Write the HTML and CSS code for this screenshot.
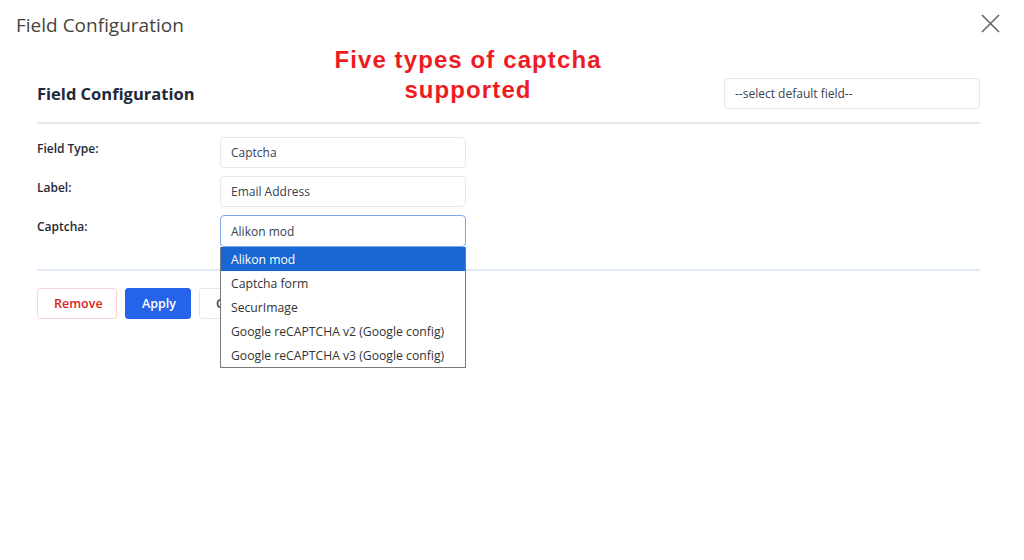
FILE: index.html
```html
<!DOCTYPE html>
<html lang="en">
<head>
    <meta charset="UTF-8">
    <title>Field Configuration</title>
    <link rel="stylesheet" href="styles.css">
</head>
<body>
    <div class="modal">
        <div class="modal-header">
            <h1 class="modal-title">Field Configuration</h1>
            <button class="close-btn" aria-label="Close">
                <svg width="19" height="19" viewBox="0 0 19 19">
                    <path d="M1 1 L18 18 M18 1 L1 18" stroke="#6b6560" stroke-width="1.6" fill="none"/>
                </svg>
            </button>
        </div>

        <div class="modal-body">
            <div class="note">Five types of captcha<br>supported</div>

            <div class="config-head">
                <h2 class="config-title">Field Configuration</h2>
                <div class="field-box default-field">--select default field--</div>
            </div>

            <div class="config-form">
                <div class="form-row">
                    <label class="form-label">Field Type:</label>
                    <div class="field-box">Captcha</div>
                </div>
                <div class="form-row">
                    <label class="form-label">Label:</label>
                    <div class="field-box">Email Address</div>
                </div>
                <div class="form-row">
                    <label class="form-label">Captcha:</label>
                    <div class="select-wrap">
                        <div class="field-box focused">Alikon mod</div>
                        <ul class="options">
                            <li class="selected">Alikon mod</li>
                            <li>Captcha form</li>
                            <li>SecurImage</li>
                            <li>Google reCAPTCHA v2 (Google config)</li>
                            <li>Google reCAPTCHA v3 (Google config)</li>
                        </ul>
                    </div>
                </div>
            </div>

            <div class="actions">
                <button class="btn btn-remove">Remove</button>
                <button class="btn btn-apply">Apply</button>
                <button class="btn btn-cancel">Cancel</button>
            </div>
        </div>
    </div>
</body>
</html>
```

FILE: styles.css
```css
* {
    margin: 0;
    padding: 0;
    box-sizing: border-box;
    font-family: 'Open Sans', sans-serif;
}

body {
    background-color: #fff;
    width: 1024px;
    height: 560px;
    overflow: hidden;
}

.modal-header {
    display: flex;
    align-items: flex-start;
    justify-content: space-between;
    padding: 10px 24px 0 16px;
}

.modal-title {
    font-size: 19px;
    font-weight: 400;
    line-height: 30px;
    color: #48423e;
}

.close-btn {
    background: none;
    border: none;
    margin-top: 4px;
    cursor: pointer;
}

.modal-body {
    position: relative;
    padding: 38px 44px 0 37px;
}

/* texto de destaque */
.note {
    position: absolute;
    left: 268px;
    top: 5px;
    width: 400px;
    text-align: center;
    font-family: 'Liberation Sans', Arial, sans-serif;
    font-weight: 700;
    font-size: 24px;
    line-height: 30px;
    letter-spacing: 1.1px;
    color: #ed1c24;
}

.config-head {
    display: flex;
    align-items: center;
    justify-content: space-between;
    padding-bottom: 13px;
    border-bottom: 2px solid #e6e8ec;
}

.config-title {
    font-size: 16.5px;
    font-weight: 700;
    color: #1e293b;
}

.field-box {
    width: 246px;
    height: 31px;
    border: 1px solid #e2e8f0;
    border-radius: 4px;
    padding: 0 10px;
    font-size: 12px;
    line-height: 30px;
    color: #374151;
    background: #fff;
    white-space: nowrap;
}

.default-field {
    width: 256px;
}

.config-form {
    padding-top: 13px;
    padding-bottom: 22px;
    border-bottom: 2px solid #e0e8f5;
}

.form-row {
    display: grid;
    grid-template-columns: 183px 246px;
    margin-bottom: 8px;
}

.form-row:last-child {
    margin-bottom: 0;
}

.form-label {
    font-size: 12px;
    font-weight: 600;
    color: #1f2937;
    padding-top: 3px;
}

.select-wrap {
    position: relative;
}

.field-box.focused {
    height: 32px;
    border-color: #7fa7ec;
    line-height: 31px;
}

.options {
    position: absolute;
    top: 32px;
    left: 0;
    width: 246px;
    list-style: none;
    background: #fff;
    border: 1px solid #7a7a7a;
    border-top: none;
    z-index: 10;
}

.options li {
    height: 24px;
    line-height: 26px;
    padding: 0 10px;
    font-size: 12.2px;
    color: #333;
    white-space: nowrap;
    overflow: hidden;
}

.options li.selected {
    background-color: #1967d2;
    color: #fff;
}

.actions {
    display: flex;
    gap: 8px;
    padding-top: 17px;
}

.btn {
    height: 31px;
    padding: 0 16px;
    font-size: 12.5px;
    font-weight: 600;
    border-radius: 3px;
    background: #fff;
    cursor: pointer;
}

.btn-remove {
    width: 80px;
    border: 1px solid #fbd5d5;
    color: #e02424;
}

.btn-apply {
    width: 66px;
    border: 1px solid #2563eb;
    background: #2563eb;
    color: #fff;
}

.btn-cancel {
    border: 1px solid #e2e8f0;
    color: #374151;
}
```
